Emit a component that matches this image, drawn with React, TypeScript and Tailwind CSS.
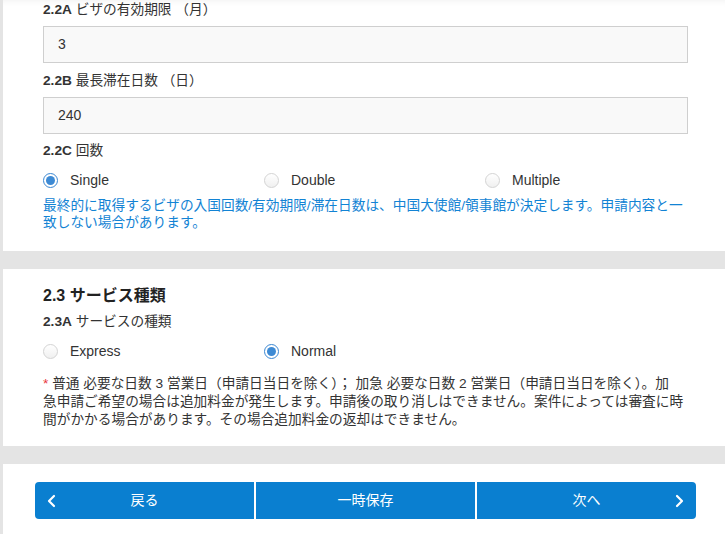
const font = { fontFamily: '"Liberation Sans", Arial, "Noto Sans CJK JP", sans-serif' };

function Radio({ label, checked }: { label: string; checked?: boolean }) {
  return (
    <label className="flex shrink-0 items-center h-5 w-[221px] text-[14px] text-[#333]">
      {checked ? (
        <span className="w-[15px] h-[15px] rounded-full border border-[#3b87d2] bg-white flex items-center justify-center">
          <span className="w-[9px] h-[9px] rounded-full bg-[#3d8ad4]" />
        </span>
      ) : (
        <span className="w-[15px] h-[15px] rounded-full border border-[#d4d4d4] bg-gradient-to-b from-white to-[#f0f0f0]" />
      )}
      <span className="ml-[12px]">{label}</span>
    </label>
  );
}

function Field({ code, text, value }: { code: string; text: string; value: string }) {
  return (
    <>
      <div className="h-[18px] text-[13.7px] leading-[18px] text-[#333]">
        <b>{code}</b> {text}
      </div>
      <div className="mt-[7px] h-[37px] border border-[#cfcfcf] bg-[#f9f9f9] flex items-center px-[14px] text-[14px] text-[#333]">
        {value}
      </div>
    </>
  );
}

function Chevron({ dir }: { dir: "left" | "right" }) {
  return (
    <svg width="9" height="14" viewBox="0 0 9 14" fill="none" stroke="white" strokeWidth="2.2" strokeLinecap="round" strokeLinejoin="round">
      {dir === "left" ? <polyline points="7,2 2,7 7,12" /> : <polyline points="2,2 7,7 2,12" />}
    </svg>
  );
}

export default function App() {
  return (
    <div className="min-h-screen bg-[#e4e4e4] pl-[3px] overflow-hidden" style={font}>
      {/* 2.2 visa details */}
      <section className="bg-white pl-10 pr-[37px] pt-px pb-[20px] shadow-[inset_0_6px_6px_-5px_rgba(0,0,0,0.06)]">
        <Field code="2.2A" text="ビザの有効期限 （月）" value="3" />
        <div className="mt-[9px]">
          <Field code="2.2B" text="最長滞在日数 （日）" value="240" />
        </div>
        <div className="mt-[8px] h-[18px] text-[13.7px] leading-[18px] text-[#333]">
          <b>2.2C</b> 回数
        </div>
        <div className="mt-[10px] flex">
          <Radio label="Single" checked />
          <Radio label="Double" />
          <Radio label="Multiple" />
        </div>
        <p className="mt-[7px] text-[13.7px] leading-[17px] text-[#1283d4] whitespace-nowrap">
          最終的に取得するビザの入国回数/有効期限/滞在日数は、中国大使館/領事館が決定します。申請内容と一
          <br />
          致しない場合があります。
        </p>
      </section>

      {/* 2.3 service */}
      <section className="mt-[18px] bg-white pl-10 pr-[37px] pt-[17px] pb-[17px]">
        <h2 className="text-[16px] leading-[20px] font-bold text-[#222]">2.3 サービス種類</h2>
        <div className="mt-[7px] h-[18px] text-[13.7px] leading-[18px] text-[#333]">
          <b>2.3A</b> サービスの種類
        </div>
        <div className="mt-[10px] flex">
          <Radio label="Express" />
          <Radio label="Normal" checked />
        </div>
        <p className="mt-[14px] text-[13.7px] leading-[18px] text-[#333] whitespace-nowrap">
          <span className="text-[#e8343a]">*</span> 普通 必要な日数 3 営業日（申請日当日を除く）； 加急 必要な日数 2 営業日（申請日当日を除く）。加
          <br />
          急申請ご希望の場合は追加料金が発生します。申請後の取り消しはできません。案件によっては審査に時
          <br />
          間がかかる場合があります。その場合追加料金の返却はできません。
        </p>
      </section>

      {/* navigation */}
      <section className="mt-[18px] bg-white pl-8 pt-[18px] pb-[20px]">
        <div className="flex gap-[2px] w-[661px] text-[14px] text-white">
          <button className="relative w-[219px] h-[37px] bg-[#0a7fd0] rounded-l-[4px] flex items-center justify-center">
            <span className="absolute left-[12px] top-[12px]"><Chevron dir="left" /></span>
            戻る
          </button>
          <button className="w-[219px] h-[37px] bg-[#0a7fd0] flex items-center justify-center">一時保存</button>
          <button className="relative w-[219px] h-[37px] bg-[#0a7fd0] rounded-r-[4px] flex items-center justify-center">
            次へ
            <span className="absolute right-[12px] top-[12px]"><Chevron dir="right" /></span>
          </button>
        </div>
      </section>
    </div>
  );
}
